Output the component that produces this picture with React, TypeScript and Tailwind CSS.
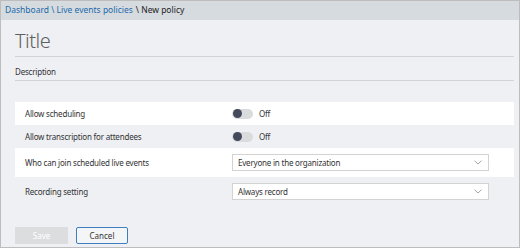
import { useState } from "react";

function Toggle({ on, onChange }: { on: boolean; onChange: (v: boolean) => void }) {
  return (
    <button
      type="button"
      onClick={() => onChange(!on)}
      className="flex items-center gap-[6px] text-[8px] tracking-[-0.2px] text-[#333]"
    >
      <span className="flex h-[10px] w-[21px] items-center rounded-full bg-[#dadbdd] px-[1px]">
        <span className="h-[9px] w-[9px] rounded-full bg-[#434a5b]" />
      </span>
      <span>{on ? "On" : "Off"}</span>
    </button>
  );
}

function Select({ value }: { value: string }) {
  return (
    <div className="flex h-[17px] w-[257px] items-center justify-between border border-[#d3d3d3] bg-white pl-[5px] pr-[6px] text-[8px] tracking-[-0.2px] text-[#333]">
      <span>{value}</span>
      <svg width="8" height="5" viewBox="0 0 8 5" fill="none" stroke="#9a9a9a" strokeWidth="0.9">
        <path d="M0.5 0.7 L4 4 L7.5 0.7" />
      </svg>
    </div>
  );
}

function Row({ label, white, tall, children }: { label: string; white?: boolean; tall?: boolean; children: React.ReactNode }) {
  return (
    <div className={`flex items-center ${tall ? "h-[29px]" : "h-[23px]"} ${white ? "bg-white" : ""}`}>
      <div className="w-[217px] pl-[10px] text-[8px] tracking-[-0.2px] text-[#333]">{label}</div>
      {children}
    </div>
  );
}

export default function App() {
  const [scheduling, setScheduling] = useState(false);
  const [transcription, setTranscription] = useState(false);

  return (
    <div
      className="flex h-[248px] w-[520px] flex-col border border-[#bdbdbd] bg-[#eff0f3]"
      style={{ fontFamily: '"Noto Sans", "Open Sans", sans-serif' }}
    >
      <div className="flex h-[19px] shrink-0 items-center bg-[#d6dbe0] px-[4px] text-[8.5px]">
        <a className="text-[#1c6aa8]">Dashboard \ Live events policies</a>
        <span className="ml-[3px] text-[#222]">\ New policy</span>
      </div>

      <div className="pl-[14px] pr-[5px]">
        <div className="border-b border-[#d2d3d5] pt-[8px] pb-[2px] text-[20px] leading-[26px] font-light tracking-[-0.5px] text-[#5f5f5f]">
          Title
        </div>
        <div className="border-b border-[#d2d3d5] pt-[8px] pb-[2px] text-[8px] leading-[13px] tracking-[-0.2px] text-[#333]">
          Description
        </div>

        <div className="mt-[21px]">
          <Row label="Allow scheduling" white>
            <Toggle on={scheduling} onChange={setScheduling} />
          </Row>
          <Row label="Allow transcription for attendees">
            <Toggle on={transcription} onChange={setTranscription} />
          </Row>
          <Row label="Who can join scheduled live events" white tall>
            <Select value="Everyone in the organization" />
          </Row>
          <Row label="Recording setting" tall>
            <Select value="Always record" />
          </Row>
        </div>

        <div className="mt-[21px] flex gap-[8px]">
          <button type="button" disabled className="h-[17px] w-[53px] bg-[#dcdddf] text-[8px] text-white">
            Save
          </button>
          <button type="button" className="h-[17px] w-[52px] rounded-[2px] border border-[#3d7fc1] bg-[#f4f5f7] text-[8px] text-[#333]">
            Cancel
          </button>
        </div>
      </div>
    </div>
  );
}
